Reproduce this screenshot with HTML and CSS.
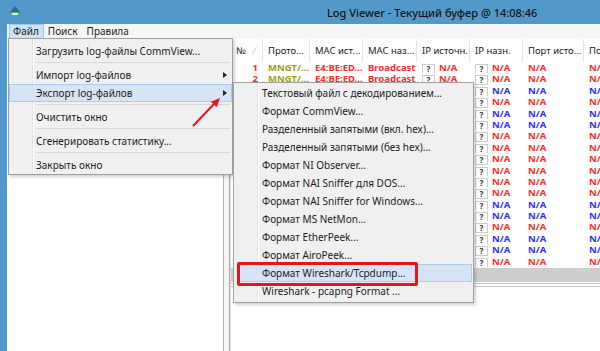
FILE: index.html
```html
<!DOCTYPE html>
<html lang="ru">
<head>
  <meta charset="UTF-8">
  <title>Log Viewer</title>
  <link rel="stylesheet" href="styles.css">
</head>
<body>
  <div class="window">
    <div class="titlebar">
      <svg class="app-icon" width="12" height="11" viewBox="0 0 12 11">
        <polygon points="6,0 12,7 0,7" fill="#2c66b8"/>
        <rect x="1" y="6" width="10" height="4" fill="#4fae52"/>
        <rect x="3" y="7" width="6" height="2" fill="#d6ecff"/>
      </svg>
      <span class="title">Log Viewer - Текущий буфер @ 14:08:46</span>
    </div>
    <div class="frame">
      <div class="menubar">
        <span class="menubar-item open">Файл</span>
        <span class="menubar-item">Поиск</span>
        <span class="menubar-item">Правила</span>
      </div>
      <div class="workspace">
        <div class="left-pane"></div>
        <div class="splitter"></div>
        <div class="log-area">
          <div class="log-grid" id="log-grid">
            <div class="head">№<span class="sort">⁄</span></div>
            <div class="head">Прото...</div>
            <div class="head">MAC ист...</div>
            <div class="head">MAC наз...</div>
            <div class="head">IP источн.</div>
            <div class="head">IP назн.</div>
            <div class="head">Порт исто...</div>
            <div class="head">Порт назн...</div>
          </div>
          <div class="hscroll"></div>
          <div class="status-lines"></div>
        </div>
      </div>
    </div>

    <div class="menu main-menu">
      <div class="menu-item">Загрузить log-файлы CommView...</div>
      <div class="menu-sep"></div>
      <div class="menu-item has-sub">Импорт log-файлов</div>
      <div class="menu-item has-sub active">Экспорт log-файлов</div>
      <div class="menu-sep"></div>
      <div class="menu-item">Очистить окно</div>
      <div class="menu-sep"></div>
      <div class="menu-item">Сгенерировать статистику...</div>
      <div class="menu-sep"></div>
      <div class="menu-item">Закрыть окно</div>
    </div>

    <div class="menu sub-menu">
      <div class="menu-item">Текстовый файл с декодированием...</div>
      <div class="menu-item">Формат CommView...</div>
      <div class="menu-item">Разделенный запятыми (вкл. hex)...</div>
      <div class="menu-item">Разделенный запятыми (без hex)...</div>
      <div class="menu-item">Формат NI Observer...</div>
      <div class="menu-item">Формат NAI Sniffer для DOS...</div>
      <div class="menu-item">Формат NAI Sniffer for Windows...</div>
      <div class="menu-item">Формат MS NetMon...</div>
      <div class="menu-item">Формат EtherPeek...</div>
      <div class="menu-item">Формат AiroPeek...</div>
      <div class="menu-item active">Формат Wireshark/Tcpdump...</div>
      <div class="menu-item">Wireshark - pcapng Format ...</div>
    </div>

    <div class="callout-box"></div>
    <svg class="callout-arrow" width="40" height="40" viewBox="0 0 40 40">
      <line x1="8" y1="34" x2="29" y2="12" stroke="#e3161d" stroke-width="2"/>
      <polygon points="35,6 31.7,15.3 25.9,9.7" fill="#e3161d"/>
    </svg>
  </div>

  <script>
    const grid = document.getElementById("log-grid");
    // R = красная строка, B = синяя
    const rowColors = "RRBRBBRRRRRRBBRBBR";

    function cell(text, cls) {
      const div = document.createElement("div");
      div.className = "cell " + cls;
      div.textContent = text;
      return div;
    }

    function ipCell(cls) {
      const div = document.createElement("div");
      div.className = "cell " + cls;
      div.innerHTML = '<span class="q">?</span>N/A';
      return div;
    }

    [...rowColors].forEach((c, i) => {
      const color = c === "R" ? "red" : "blue";
      grid.appendChild(cell(i + 1, "num " + color));
      grid.appendChild(cell("MNGT/...", "olive"));
      grid.appendChild(cell("E4:BE:ED...", color));
      grid.appendChild(cell("Broadcast", color));
      grid.appendChild(ipCell(color));
      grid.appendChild(ipCell(color));
      grid.appendChild(cell("N/A", color));
      grid.appendChild(cell("N/A", color));
    });
  </script>
</body>
</html>
```

FILE: styles.css
```css
body {
  margin: 0;
  font-family: "Noto Sans", "Open Sans", sans-serif;
  color: #1b1b1b;
}

.window {
  position: relative;
  width: 600px;
  height: 351px;
  overflow: hidden;
  display: flex;
  flex-direction: column;
  background-color: #5299c9;
}

.titlebar {
  height: 24px;
  display: flex;
  align-items: center;
  padding-left: 9px;
  flex-shrink: 0;
}

.app-icon {
  margin-top: -2px;
}

.title {
  margin-left: 306px;
  font-size: 11px;
  font-weight: 500;
  color: #141414;
  white-space: nowrap;
}

.frame {
  flex: 1;
  margin-left: 7px;
  display: flex;
  flex-direction: column;
  background-color: #fff;
  min-height: 0;
}

.menubar {
  height: 15px;
  display: flex;
  align-items: center;
  padding-left: 2px;
  background-color: #f5f6f7;
  font-size: 10px;
  flex-shrink: 0;
}

.menubar-item {
  height: 13px;
  line-height: 13px;
  padding: 0 4px 0 3px;
  border: 1px solid transparent;
}

.menubar-item.open {
  background-color: #cce4f7;
  border-color: #99c8ee;
}

.workspace {
  flex: 1;
  display: flex;
  min-height: 0;
}

.left-pane {
  width: 216px;
  background-color: #fff;
  border-right: 1px solid #b4b4b4;
}

.splitter {
  width: 5px;
  background-color: #f4f4f4;
  border-right: 1px solid #a9a9a9;
}

.log-area {
  flex: 1;
  overflow: hidden;
  border-left: 1px solid #e0e0e0;
}

.log-grid {
  display: grid;
  grid-template-columns: 32px 47px 53px 54px 53px 53px 61px 60px;
  grid-template-rows: 23px;
  grid-auto-rows: 11.4px;
}

.head {
  font-size: 9.5px;
  line-height: 23px;
  padding-left: 5px;
  color: #222;
  white-space: nowrap;
  overflow: hidden;
  border-right: 1px solid #e6e6e6;
}

.head .sort {
  margin-left: 8px;
  color: #b8b8b8;
  font-size: 9px;
}

.cell {
  font-size: 9.5px;
  font-weight: 700;
  line-height: 11.4px;
  padding-left: 5px;
  white-space: nowrap;
  overflow: hidden;
}

.cell.num {
  text-align: right;
  padding: 0 5px 0 0;
}

.red {
  color: #ff2b2b;
}

.blue {
  color: #2f2fff;
}

.olive {
  color: #9d9d18;
}

.q {
  display: inline-block;
  width: 11px;
  height: 8px;
  margin-right: 4px;
  border: 1px solid #cdcdcd;
  background-color: #fff;
  color: #333;
  font-size: 8px;
  line-height: 8px;
  text-align: center;
  vertical-align: -1px;
}

.hscroll {
  height: 14px;
  margin-top: 1px;
  background-color: #cdcdcd;
}

.status-lines {
  height: 2px;
  margin-top: 1px;
  border-top: 1px solid #c6c6c6;
  border-bottom: 1px solid #c6c6c6;
}

/* выпадающие меню */
.menu {
  position: absolute;
  box-sizing: border-box;
  background-color: #f0f0f0;
  border: 1px solid #a0a0a0;
  box-shadow: 2px 2px 3px rgba(0, 0, 0, 0.18);
  font-size: 10px;
}

.menu::before {
  content: "";
  position: absolute;
  top: 0;
  bottom: 0;
  width: 1px;
  background-color: #e2e2e2;
  border-right: 1px solid #fff;
}

.main-menu {
  left: 8px;
  top: 38px;
  width: 225px;
  height: 137px;
  padding-top: 3px;
}

.main-menu::before {
  left: 23px;
}

.sub-menu {
  left: 233px;
  top: 82px;
  width: 241px;
  height: 221px;
  padding: 1px 1px 0 4px;
}

.sub-menu::before {
  left: 23px;
}

.menu-item {
  position: relative;
  box-sizing: border-box;
  height: 18px;
  line-height: 16px;
  padding-left: 26px;
  border: 1px solid transparent;
  white-space: nowrap;
}

.sub-menu .menu-item {
  padding-left: 23px;
}

.menu-item.active {
  background-color: #d5e5f6;
  border-color: #a8cbee;
}

.menu-item.has-sub::after {
  content: "";
  position: absolute;
  right: 4px;
  top: 5px;
  border-top: 3px solid transparent;
  border-bottom: 3px solid transparent;
  border-left: 4px solid #222;
}

.menu-sep {
  height: 6px;
  margin-left: 27px;
  position: relative;
}

.menu-sep::after {
  content: "";
  position: absolute;
  left: 0;
  right: 2px;
  top: 2px;
  border-top: 1px solid #d7d7d7;
}

/* пометки поверх скриншота */
.callout-box {
  position: absolute;
  left: 237px;
  top: 262px;
  width: 181px;
  height: 24px;
  box-sizing: border-box;
  border: 3px solid #e3161d;
  border-radius: 2px;
}

.callout-arrow {
  position: absolute;
  left: 185px;
  top: 92px;
}
```
